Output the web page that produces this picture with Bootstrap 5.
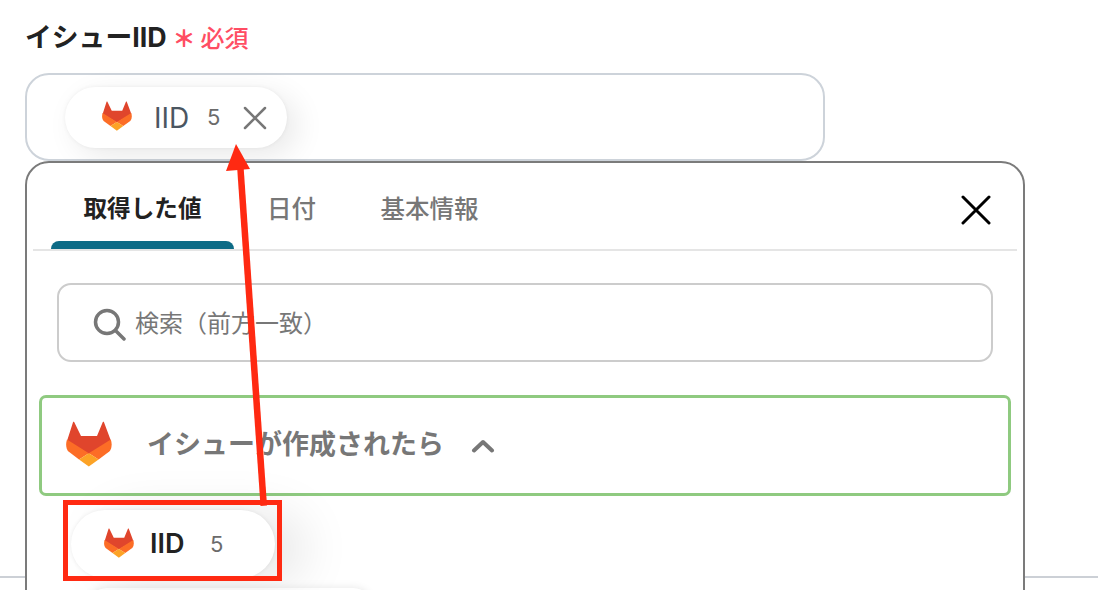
<!DOCTYPE html>
<html lang="ja">
<head>
    <meta charset="UTF-8">
    <title>イシューIID</title>
    <link rel="stylesheet" href="https://cdn.jsdelivr.net/npm/bootstrap@5.3.0/dist/css/bootstrap.min.css">
    <style>
        html, body { height: 590px; overflow: hidden; background: #fff; }
        body { font-family: Inter, "Noto Sans CJK JP", sans-serif; color: #222; }
        .page-wrap { position: relative; height: 590px; padding: 20px 0 0 25px; overflow: hidden; }
        .field-label { font-size: 26.800px; font-weight: 700; line-height: 34px; height: 53px; color: #222; white-space: nowrap; }
        .req-mark { color: #ff4d63; font-size: 24px; font-weight: 500; margin-left: 6px; }
        .req-star { font-family: "Noto Sans CJK JP", sans-serif; font-size: 23px; font-weight: 900; margin-right: 5px; }
        .field-box { width: 800px; height: 88px; border: 2px solid #cdd3da; border-radius: 24px; padding: 12px 0 0 38px; }
        .value-chip { height: 61px; background: #fff; border-radius: 31px; box-shadow: 0 0 4px rgba(0, 0, 0, .06), 10px 8px 30px rgba(0, 0, 0, .09); }
        .chip-top { width: 222px; padding-left: 37px; }
        .chip-top .chip-name { font-size: 28px; color: #4b5661; margin-left: 22px; width: 53px; }
        .chip-num { font-size: 22px; color: #6b6b6b; }
        .chip-x { margin-left: 23px; }
        .chip-fox { margin-top: -3px; }
        .chip-list { width: 204px; height: 68px; margin: 14px 0 0 38px; border-radius: 34px; padding-left: 33px; box-shadow: 0 0 4px rgba(0, 0, 0, .08), 30px 4px 50px rgba(0, 0, 0, .10); position: relative; }
        .chip-list .chip-name { font-size: 27px; font-weight: 600; color: #222; margin-left: 16px; width: 60px; }
        .next-chip { width: 286px; height: 40px; margin: 10px 0 0 54px; border-radius: 34px; background: #fff; box-shadow: 0 0 8px rgba(0, 0, 0, .10); }
        .picker-panel { position: absolute; left: 25px; top: 161px; width: 1000px; height: 460px; background: #fff; border: 2px solid #7b7b7b; border-radius: 24px; padding: 0 6px; }
        .picker-tabs { height: 88px; border-bottom: 2px solid #e5e5e5; flex-wrap: nowrap; }
        .picker-tabs .nav-link { height: 86px; padding: 28px 0 0; font-size: 24.500px; font-weight: 500; line-height: 36px; color: #777; border-radius: 0; text-align: center; white-space: nowrap; }
        .picker-tabs .nav-link.active { color: #222; font-size: 23.600px; font-weight: 700; position: relative; }
        .picker-tabs .nav-link.active::after { content: ""; position: absolute; left: 0; right: 0; bottom: 0; height: 8px; background: #0d6b86; border-radius: 8px 8px 0 0; }
        .tab-one { width: 183px; margin-left: 18px; }
        .tab-two { width: 47px; margin-left: 33px; }
        .tab-three { width: 99px; margin-left: 66px; }
        .tab-close { width: 30px; height: 30px; margin: 32px 26px 0 auto; }
        .search-box { width: 936px; height: 79px; margin: 32px 0 0 24px; border: 2px solid #ccc; border-radius: 14px; padding: 3px 0 0 34px; color: #777; font-size: 24px; }
        .search-box svg { margin-right: 9px; }
        .trigger-box { width: 972px; height: 101px; margin: 33px 0 0 6px; border: 3.500px solid #8fca80; border-radius: 7px; padding-left: 24px; color: #777; font-size: 27px; font-weight: 600; }
        .trigger-box .trigger-fox { margin-top: -4px; }
        .trigger-box .trigger-text { margin-left: 35px; }
        .trigger-box .chev { margin-left: 27px; }
        .below-rule { position: absolute; left: 0; right: 0; top: 576px; border-top: 2px solid #ccd0d6; }
        .red-frame { position: absolute; left: 63px; top: 500px; width: 219px; height: 81px; border: 5px solid #ff2a12; z-index: 3; }
        .red-arrow { position: absolute; left: 0; top: 0; z-index: 4; pointer-events: none; }
    </style>
</head>
<body>
    <svg width="0" height="0" class="position-absolute">
        <symbol id="fox" viewBox="0 0 46 46">
            <path d="M8.300 1.200 15 15h16l5.700-13.800c.4-.6 1-.6 1.300 0L45 20 22.800 33 1 20 7 1.200c.3-.6 1-.6 1.300 0Z" fill="#e0452c"/>
            <path d="M1 18.500 22.800 32.300 13 38.500 2.500 30.500C.2 28.500-.6 23 1 18.500Z" fill="#fc6d26"/>
            <path d="M44.800 18.500 22.800 32.300 32.600 38.500 43.300 30.500C45.600 28.500 46.400 23 44.800 18.500Z" fill="#fc6d26"/>
            <path d="M22.800 32.300 32.600 38.500 22.800 45.500 13 38.500Z" fill="#fca326"/>
        </symbol>
    </svg>

    <div class="page-wrap">
        <div class="field-label">イシューIID<span class="req-mark"><span class="req-star">＊</span>必須</span></div>

        <div class="field-box">
            <div class="value-chip chip-top d-flex align-items-center">
                <svg class="chip-fox" width="30" height="30"><use href="#fox"/></svg>
                <span class="chip-name">IID</span>
                <span class="chip-num">5</span>
                <svg class="chip-x" width="24" height="24" viewBox="0 0 24 24" fill="none" stroke="#777" stroke-width="2.500" stroke-linecap="round"><path d="M2 2 22 22M22 2 2 22"/></svg>
            </div>
        </div>

        <div class="below-rule"></div>

        <div class="picker-panel">
            <ul class="nav picker-tabs">
                <li class="nav-item tab-one"><a class="nav-link active" href="#">取得した値</a></li>
                <li class="nav-item tab-two"><a class="nav-link" href="#">日付</a></li>
                <li class="nav-item tab-three"><a class="nav-link" href="#">基本情報</a></li>
                <li class="tab-close">
                    <svg class="d-block" width="30" height="30" viewBox="0 0 30 30" fill="none" stroke="#000" stroke-width="3" stroke-linecap="round"><path d="M2 2 28 28M28 2 2 28"/></svg>
                </li>
            </ul>

            <div class="search-box d-flex align-items-center">
                <svg width="33" height="33" viewBox="0 0 33 33" fill="none" stroke="#777" stroke-width="3.500" stroke-linecap="round"><circle cx="14" cy="14" r="11.500"/><path d="M22.500 22.500 31 31"/></svg>
                <span>検索（前方一致）</span>
            </div>

            <div class="trigger-box d-flex align-items-center">
                <svg class="trigger-fox" width="46" height="46"><use href="#fox"/></svg>
                <span class="trigger-text">イシューが作成されたら</span>
                <svg class="chev" width="24" height="14" viewBox="0 0 24 14" fill="none" stroke="#777" stroke-width="4" stroke-linecap="round" stroke-linejoin="round"><path d="M3 11.500 12 3l9 8.500"/></svg>
            </div>

            <div class="value-chip chip-list d-flex align-items-center">
                <svg class="chip-fox" width="30" height="30"><use href="#fox"/></svg>
                <span class="chip-name">IID</span>
                <span class="chip-num">5</span>
            </div>
            <div class="next-chip"></div>
        </div>

        <div class="red-frame"></div>
        <svg class="red-arrow" width="1098" height="590" viewBox="0 0 1098 590">
            <path d="M260.500 506 237 166l6.500-.5L267 505.500Z" fill="#ff2a12"/>
            <path d="M236 144 250 169 226 171Z" fill="#ff2a12"/>
        </svg>
    </div>
    <script src="https://cdn.jsdelivr.net/npm/bootstrap@5.3.0/dist/js/bootstrap.bundle.min.js"></script>
</body>
</html>
